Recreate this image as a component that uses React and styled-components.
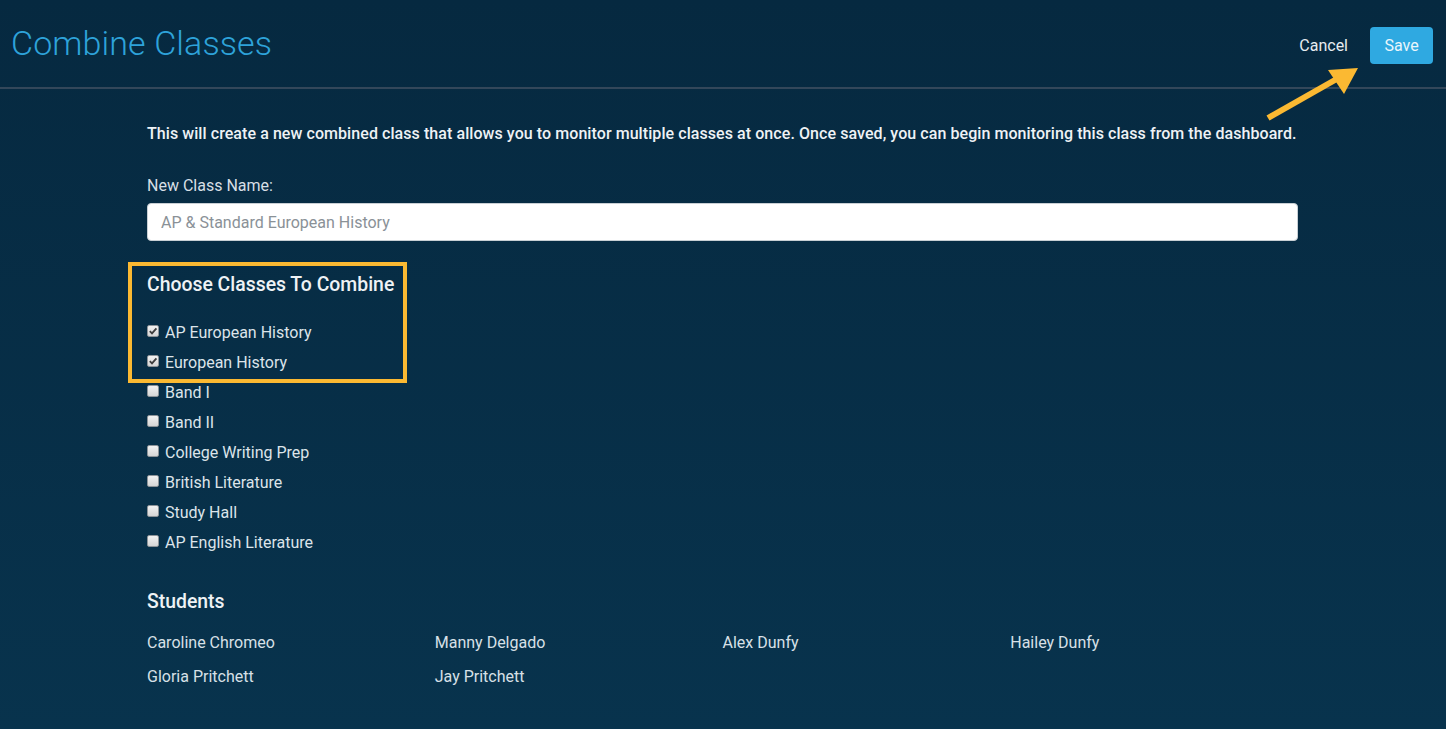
import React from 'react';
import styled, { createGlobalStyle } from 'styled-components';

const GlobalStyle = createGlobalStyle`
  html, body {
    margin: 0;
    padding: 0;
  }
  body {
    font-family: Roboto, "Liberation Sans", sans-serif;
    background: linear-gradient(180deg, #062940 0%, #08334d 100%);
    min-height: 729px;
    color: #e6ecf0;
  }
`;

const classes = [
  { name: 'AP European History', checked: true },
  { name: 'European History', checked: true },
  { name: 'Band I', checked: false },
  { name: 'Band II', checked: false },
  { name: 'College Writing Prep', checked: false },
  { name: 'British Literature', checked: false },
  { name: 'Study Hall', checked: false },
  { name: 'AP English Literature', checked: false },
];

const students = [
  'Caroline Chromeo',
  'Manny Delgado',
  'Alex Dunfy',
  'Hailey Dunfy',
  'Gloria Pritchett',
  'Jay Pritchett',
];

function Check({ checked }) {
  return (
    <Box>
      {checked && (
        <svg width="10" height="10" viewBox="0 0 10 10">
          <path d="M1.8 5.2 L4 7.4 L8.4 2.4" fill="none" stroke="#3d3d3d" strokeWidth="1.8" />
        </svg>
      )}
    </Box>
  );
}

export default function App() {
  return (
    <Page>
      <GlobalStyle />
      <Header>
        <Title>Combine Classes</Title>
        <Actions>
          <CancelButton>Cancel</CancelButton>
          <SaveButton>Save</SaveButton>
        </Actions>
        <Arrow width="100" height="60" viewBox="0 0 100 60">
          <line x1="4" y1="54" x2="78" y2="12" stroke="#fbb932" strokeWidth="6" />
          <polygon points="94,4 64,6 80,30" fill="#fbb932" />
        </Arrow>
      </Header>
      <Content>
        <Intro>
          This will create a new combined class that allows you to monitor multiple classes at once. Once saved, you can begin monitoring this class from the dashboard.
        </Intro>
        <Label>New Class Name:</Label>
        <Input placeholder="AP &amp; Standard European History" />
        <ClassSection>
          <Highlight />
          <SectionTitle>Choose Classes To Combine</SectionTitle>
          <CheckList>
            {classes.map((c) => (
              <CheckRow key={c.name}>
                <Check checked={c.checked} />
                <span>{c.name}</span>
              </CheckRow>
            ))}
          </CheckList>
        </ClassSection>
        <StudentsTitle>Students</StudentsTitle>
        <StudentGrid>
          {students.map((s) => (
            <Student key={s}>{s}</Student>
          ))}
        </StudentGrid>
      </Content>
    </Page>
  );
}

const Page = styled.div`
  min-height: 729px;
`;

const Header = styled.header`
  position: relative;
  height: 89px;
  display: flex;
  align-items: center;
  justify-content: space-between;
  padding: 0 13px 0 11px;
  border-bottom: 2px solid #33475a;
  box-sizing: border-box;
`;

const Title = styled.h1`
  margin: 0 0 2px;
  font-size: 34px;
  font-weight: 300;
  color: #2ea3da;
  letter-spacing: 0.1px;
`;

const Actions = styled.div`
  display: flex;
  align-items: center;
  gap: 22px;
  margin-top: 3px;
`;

const CancelButton = styled.button`
  background: none;
  border: none;
  color: #e6ecf0;
  font-family: Roboto, "Liberation Sans", sans-serif;
  font-size: 16px;
  padding: 0;
  cursor: pointer;
`;

const SaveButton = styled.button`
  background: #2fa9e1;
  border: none;
  border-radius: 4px;
  color: #eaf6fc;
  font-family: Roboto, "Liberation Sans", sans-serif;
  font-size: 16px;
  width: 63px;
  height: 37px;
  cursor: pointer;
`;

const Arrow = styled.svg`
  position: absolute;
  left: 1264px;
  top: 64px;
`;

const Content = styled.main`
  width: 1151px;
  margin: 0 0 0 147px;
  padding-top: 34px;
`;

const Intro = styled.p`
  margin: 0 0 31px;
  font-size: 16px;
  font-weight: 500;
  line-height: 22px;
  letter-spacing: 0.07px;
  color: #eef2f5;
  white-space: nowrap;
`;

const Label = styled.div`
  font-size: 16px;
  color: #d7dfe5;
  margin-bottom: 8px;
`;

const Input = styled.input`
  display: block;
  width: 100%;
  box-sizing: border-box;
  height: 38px;
  border: 1px solid #c8cfd4;
  border-radius: 4px;
  padding: 0 13px;
  font-family: Roboto, "Liberation Sans", sans-serif;
  font-size: 16px;
  background: #fff;
  &::placeholder {
    color: #8a9197;
  }
`;

const ClassSection = styled.section`
  position: relative;
  margin-top: 32px;
  margin-bottom: 38px;
`;

const Highlight = styled.div`
  position: absolute;
  left: -19px;
  top: -11px;
  width: 279px;
  height: 121px;
  box-sizing: border-box;
  border: 4px solid #fbb932;
  pointer-events: none;
`;

const SectionTitle = styled.h2`
  margin: 0 0 27px;
  font-size: 19.4px;
  font-weight: 500;
  color: #eef2f5;
  line-height: 24px;
`;

const StudentsTitle = styled(SectionTitle)`
  margin-bottom: 20px;
`;

const CheckList = styled.div`
  display: flex;
  flex-direction: column;
  gap: 12px;
`;

const CheckRow = styled.label`
  display: flex;
  align-items: center;
  gap: 6px;
  font-size: 16px;
  line-height: 18px;
  color: #dce4ea;
`;

const Box = styled.span`
  display: flex;
  align-items: center;
  justify-content: center;
  width: 12px;
  height: 12px;
  margin-bottom: 4px;
  box-sizing: border-box;
  border: 1px solid #8e9499;
  border-radius: 2px;
  background: linear-gradient(180deg, #f2f2f2 0%, #d6d6d6 100%);
`;

const StudentGrid = styled.div`
  display: grid;
  grid-template-columns: repeat(4, 1fr);
  row-gap: 16px;
`;

const Student = styled.div`
  font-size: 16px;
  line-height: 18px;
  color: #d7e0e7;
`;
